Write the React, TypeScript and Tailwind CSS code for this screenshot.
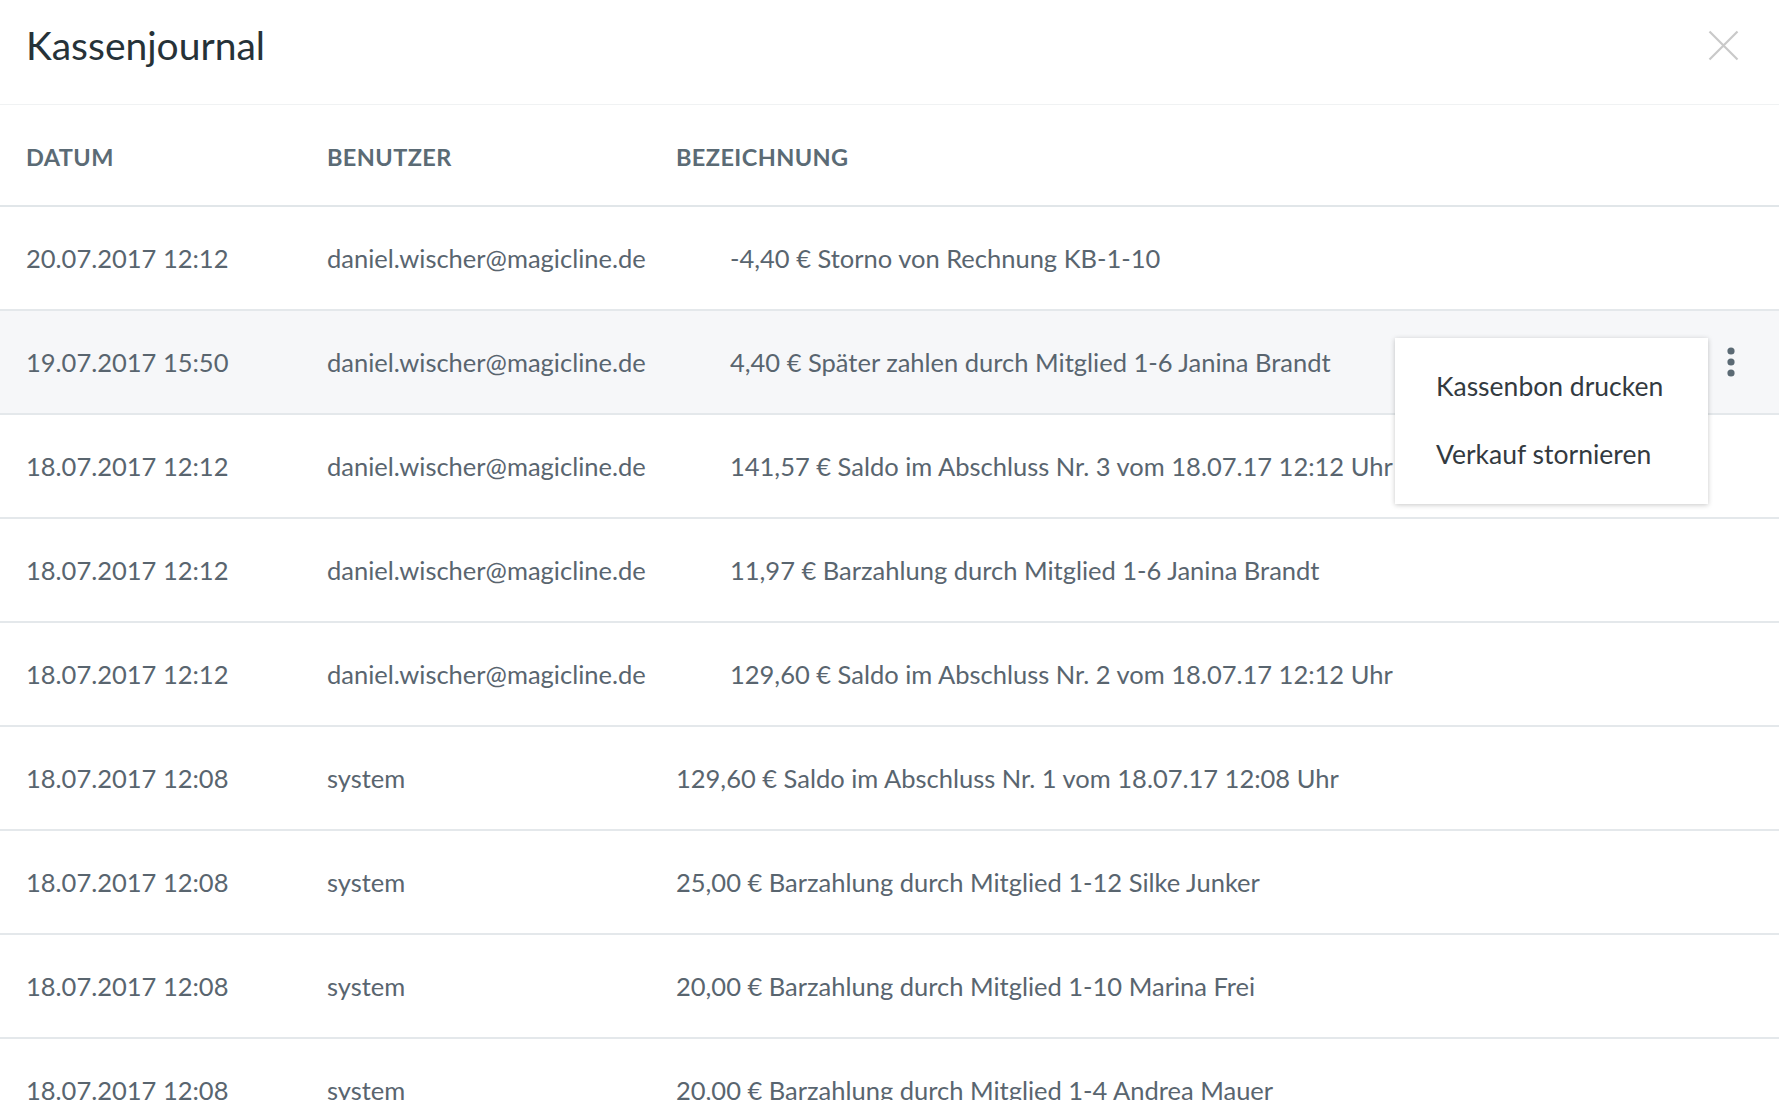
import React from 'react';

type Entry = {
  date: string;
  user: string;
  text: string;
};

const entries: Entry[] = [
  { date: '20.07.2017 12:12', user: 'daniel.wischer@magicline.de', text: '-4,40 € Storno von Rechnung KB-1-10' },
  { date: '19.07.2017 15:50', user: 'daniel.wischer@magicline.de', text: '4,40 € Später zahlen durch Mitglied 1-6 Janina Brandt' },
  { date: '18.07.2017 12:12', user: 'daniel.wischer@magicline.de', text: '141,57 € Saldo im Abschluss Nr. 3 vom 18.07.17 12:12 Uhr' },
  { date: '18.07.2017 12:12', user: 'daniel.wischer@magicline.de', text: '11,97 € Barzahlung durch Mitglied 1-6 Janina Brandt' },
  { date: '18.07.2017 12:12', user: 'daniel.wischer@magicline.de', text: '129,60 € Saldo im Abschluss Nr. 2 vom 18.07.17 12:12 Uhr' },
  { date: '18.07.2017 12:08', user: 'system', text: '129,60 € Saldo im Abschluss Nr. 1 vom 18.07.17 12:08 Uhr' },
  { date: '18.07.2017 12:08', user: 'system', text: '25,00 € Barzahlung durch Mitglied 1-12 Silke Junker' },
  { date: '18.07.2017 12:08', user: 'system', text: '20,00 € Barzahlung durch Mitglied 1-10 Marina Frei' },
  { date: '18.07.2017 12:08', user: 'system', text: '20,00 € Barzahlung durch Mitglied 1-4 Andrea Mauer' },
];

const ContextMenu: React.FC = () => (
  <div className="absolute left-[1395px] top-[27px] z-10 flex w-[313px] flex-col bg-white pt-[15px] pb-[15px] shadow-[0_1px_5px_rgba(0,0,0,0.22)]">
    <div className="flex h-[68px] items-center pl-[41px] text-[26.5px] text-[#333a3f]">Kassenbon drucken</div>
    <div className="flex h-[68px] items-center pl-[41px] text-[26.5px] text-[#333a3f]">Verkauf stornieren</div>
  </div>
);

const KebabIcon: React.FC = () => (
  <svg width="8" height="30" viewBox="0 0 8 30" className="text-[#5b6a74]">
    <circle cx="4" cy="4" r="3.6" fill="currentColor" />
    <circle cx="4" cy="15" r="3.6" fill="currentColor" />
    <circle cx="4" cy="26" r="3.6" fill="currentColor" />
  </svg>
);

export default function App() {
  return (
    <div className="h-screen w-full overflow-hidden bg-white font-['Lato','Liberation_Sans',sans-serif]">
      {/* title bar */}
      <div className="flex h-[105px] items-center justify-between border-b border-[#f0f2f3] pl-[26px] pr-[40px]">
        <h1 className="pb-[14px] text-[39px] font-normal text-[#263238]">Kassenjournal</h1>
        <svg width="31" height="31" viewBox="0 0 31 31" className="mb-[14px]">
          <path d="M1.5 1.5 L29.5 29.5 M29.5 1.5 L1.5 29.5" stroke="#c9c9c9" strokeWidth="2.2" />
        </svg>
      </div>

      {/* column header */}
      <div className="flex h-[102px] items-center border-b-2 border-[#e1e6e9] pl-[26px] pt-[6px] text-[23.5px] font-bold uppercase tracking-[0.4px] text-[#5b6b75]">
        <div className="w-[301px]">Datum</div>
        <div className="w-[349px]">Benutzer</div>
        <div>Bezeichnung</div>
      </div>

      {entries.map((e, i) => {
        const isSystem = e.user === 'system';
        const active = i === 1;
        return (
          <div
            key={i}
            className={`relative flex h-[104px] items-center border-b-2 border-[#e4e8eb] pl-[26px] text-[25.5px] text-[#59656f] ${active ? 'bg-[#f6f7f9]' : 'bg-white'}`}
          >
            <div className="w-[301px] shrink-0">{e.date}</div>
            <div className={`${isSystem ? 'w-[349px]' : 'w-[403px]'} shrink-0`}>{e.user}</div>
            <div className="whitespace-nowrap">{e.text}</div>
            {active && (
              <>
                <div className="absolute left-[1727px] top-[36px]">
                  <KebabIcon />
                </div>
                <ContextMenu />
              </>
            )}
          </div>
        );
      })}
    </div>
  );
}
